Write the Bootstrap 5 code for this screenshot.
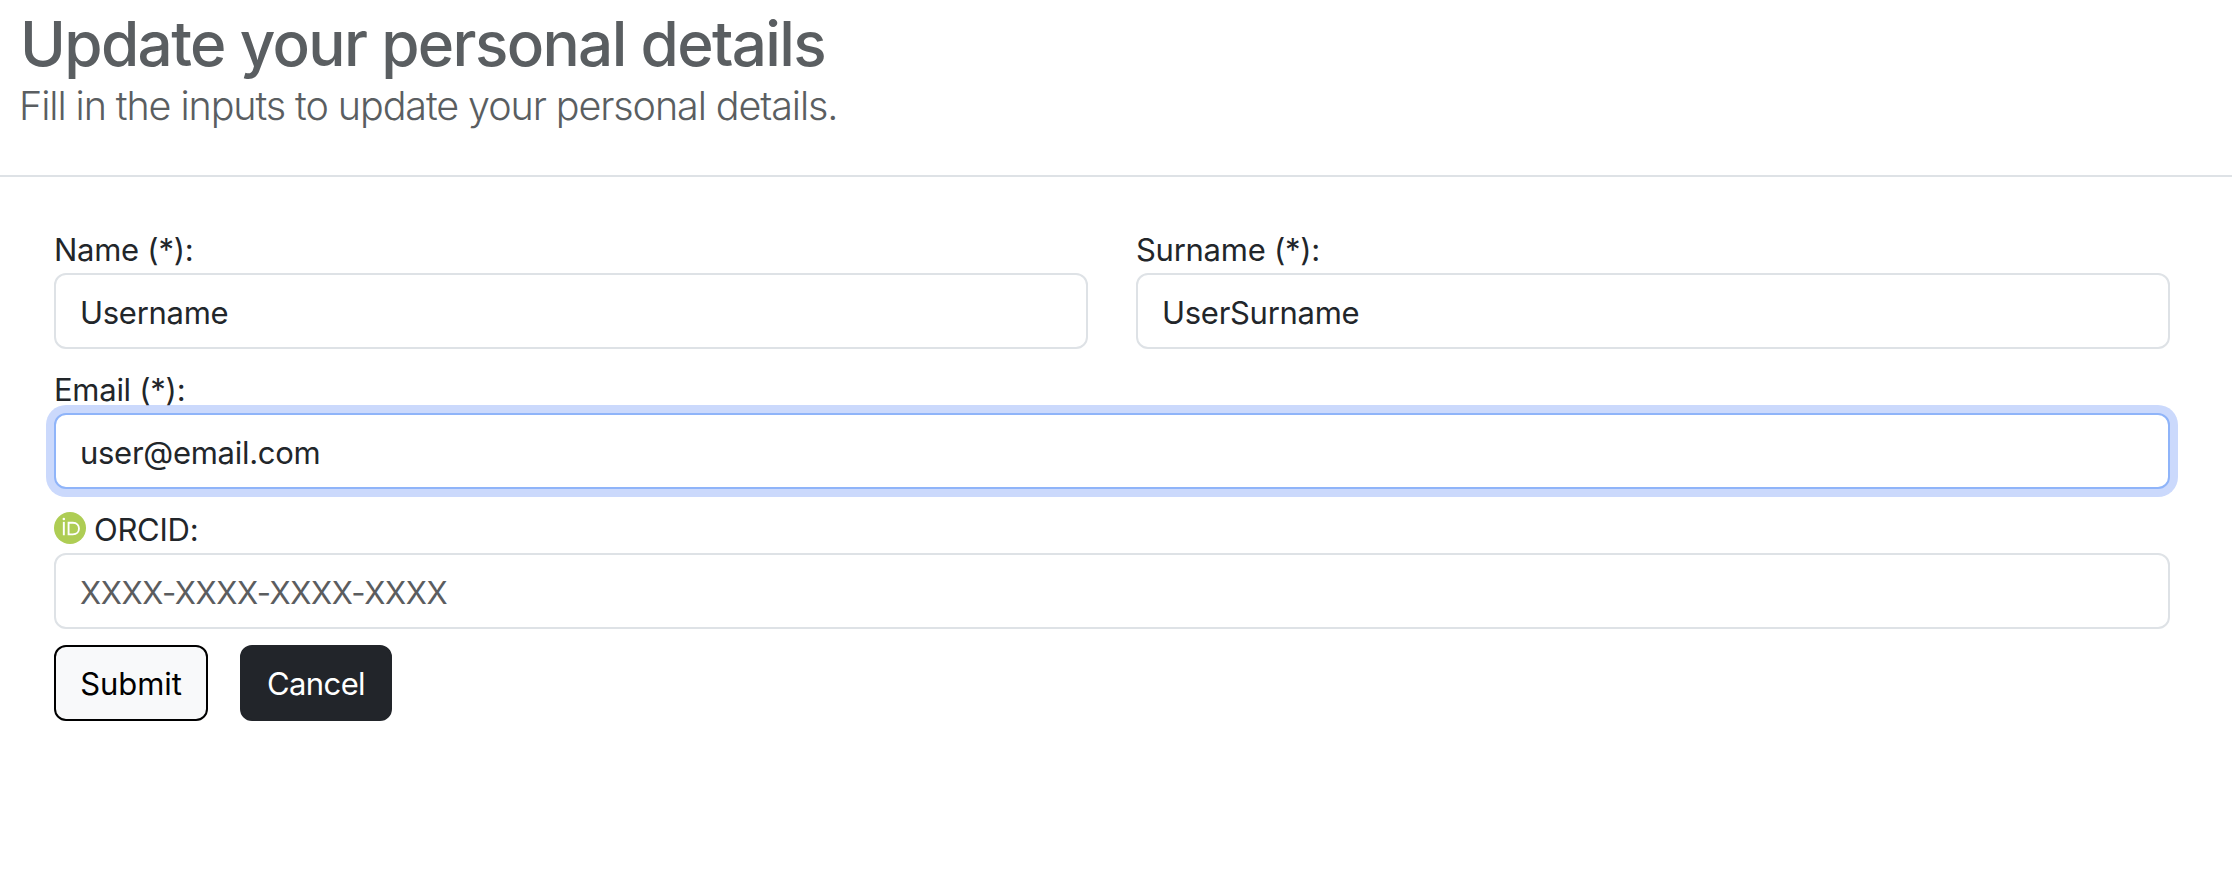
<!DOCTYPE html>
<html lang="en">
<head>
<meta charset="utf-8">
<meta name="viewport" content="width=device-width, initial-scale=1">
<title>Update your personal details</title>
<link href="https://cdn.jsdelivr.net/npm/bootstrap@5.3.0/dist/css/bootstrap.min.css" rel="stylesheet">
<style>
  :root { font-size: 32px; --bs-border-width: 2px; --bs-border-color: #dee2e6; }
  body { font-family: Inter, "Liberation Sans", sans-serif; color: #22262a; background: #fff; }
  .page-head { height: 177px; padding: 5px 19px 0; color: #5a5e61; }
  .page-head h1 { font-size: 62px; line-height: 77px; letter-spacing: -1.65px; padding-left: 1px; font-weight: 500; color: inherit; }
  .page-head .lead { font-size: 39.5px; line-height: 60px; letter-spacing: -1.1px; margin-top: -6px; }
  .details { padding: 48px 62px 0 54px; }
  .details .row { --bs-gutter-x: 48px; }
  .field-label { display: block; height: 48px; line-height: 50px; font-size: 31px; letter-spacing: -.27px; white-space: nowrap; }
  .details .form-control { height: 76px; padding: 13px 24px 11px; border: 2px solid #dee2e6; border-radius: 12px; font-size: 31px; line-height: 48px; color: #22262a; letter-spacing: -.29px; }
  .details .form-control.active-field { border-color: #8fb4f9; box-shadow: 0 0 0 8px #cbd9fc; }
  .details .form-control.tight { letter-spacing: -.4px; }
  .details .form-control::placeholder { color: #5b5d5f; opacity: 1; }
  .email-group, .orcid-group { margin-bottom: 16px; }
  .details .row.mb-3 { margin-bottom: 16px !important; }
  .actions { gap: 32px; }
  .details .btn { height: 76px; padding: 13px 0 11px; border-width: 2px; border-radius: 12px; font-size: 31px; line-height: 48px; }
  .btn-submit { width: 154px; letter-spacing: -.1px; --bs-btn-border-color: #000; --bs-btn-bg: #f8f9fa; }
  .btn-cancel { width: 152px; letter-spacing: -.6px; --bs-btn-bg: #22252a; --bs-btn-border-color: #22252a; }
  .orcid-icon { width: 32px; height: 32px; flex: none; margin-top: 7px; margin-right: 8px; }
</style>
</head>
<body>
<header class="page-head border-bottom">
  <h1 class="mb-0">Update your personal details</h1>
  <p class="lead mb-0">Fill in the inputs to update your personal details.</p>
</header>
<main class="details">
  <form>
    <div class="row mb-3">
      <div class="col-6">
        <label class="field-label" for="name">Name (*):</label>
        <input class="form-control" id="name" type="text" value="Username">
      </div>
      <div class="col-6">
        <label class="field-label" for="surname">Surname (*):</label>
        <input class="form-control" id="surname" type="text" value="UserSurname">
      </div>
    </div>
    <div class="email-group">
      <label class="field-label" for="email">Email (*):</label>
      <input class="form-control active-field" id="email" type="text" value="user@email.com">
    </div>
    <div class="orcid-group">
      <label class="field-label d-flex align-items-start" for="orcid">
        <svg class="orcid-icon" viewBox="0 0 256 256" aria-hidden="true">
          <circle cx="128" cy="128" r="128" fill="#aecd54"/>
          <rect x="70.9" y="79.1" width="15.4" height="107.1" fill="#fff"/>
          <circle cx="78.6" cy="56.8" r="10.1" fill="#fff"/>
          <path d="M116.6 86.1h33.9c34 0 49.3 24 49.3 46.6 0 23-17 46.6-49.3 46.6h-33.9z" fill="none" stroke="#fff" stroke-width="15"/>
        </svg>
        <span>ORCID:</span>
      </label>
      <input class="form-control tight" id="orcid" type="text" placeholder="XXXX-XXXX-XXXX-XXXX">
    </div>
    <div class="d-flex actions">
      <button class="btn btn-light btn-submit" type="button">Submit</button>
      <button class="btn btn-dark btn-cancel" type="button">Cancel</button>
    </div>
  </form>
</main>
<script src="https://cdn.jsdelivr.net/npm/bootstrap@5.3.0/dist/js/bootstrap.bundle.min.js"></script>
</body>
</html>
